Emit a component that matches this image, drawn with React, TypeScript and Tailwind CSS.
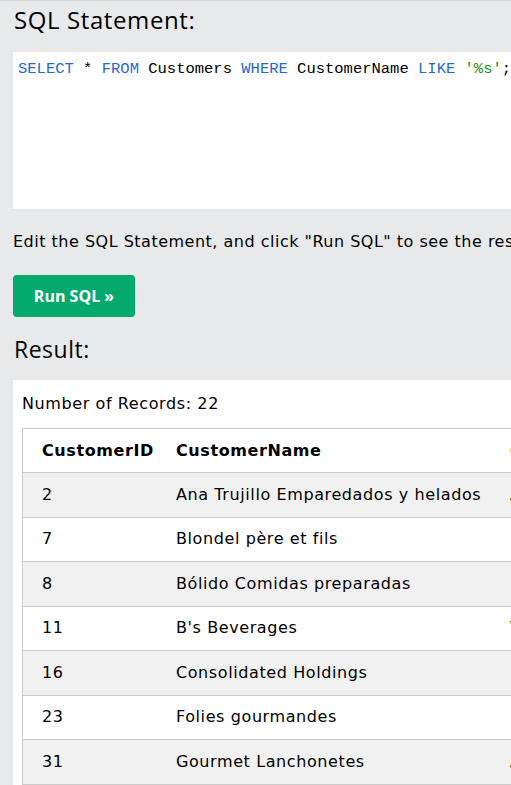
const rows = [
  ["2", "Ana Trujillo Emparedados y helados", "Ana Trujillo"],
  ["7", "Blondel père et fils", "Frédérique Citeaux"],
  ["8", "Bólido Comidas preparadas", "Martín Sommer"],
  ["11", "B's Beverages", "Victoria Ashworth"],
  ["16", "Consolidated Holdings", "Elizabeth Brown"],
  ["23", "Folies gourmandes", "Martine Rancé"],
  ["31", "Gourmet Lanchonetes", "André Fonseca"],
  ["34", "Hanari Carnes", "Mario Pontes"],
];

const heading = { fontFamily: '"Open Sans", "Noto Sans", sans-serif' };
const body = { fontFamily: '"DejaVu Sans", Verdana, sans-serif' };

const App = () => {
  return (
    <div className="w-[511px] h-[785px] overflow-hidden bg-[#e7e9eb] border-t border-[#d6d8da]">
      <div className="w-[900px] pl-[13px]">
        <h3 style={heading} className="text-[24px] tracking-[0.6px] leading-[32px] pt-[3px] pl-[1px] text-black">
          SQL Statement:
        </h3>

        <div className="mt-[16px] h-[157px] bg-white pt-[6px] pl-[5px]">
          <pre
            style={{ fontFamily: '"Liberation Mono", monospace' }}
            className="text-[15.5px] leading-[22px] text-black"
          >
            <span className="text-[#2568d4]">SELECT</span> *{" "}
            <span className="text-[#2568d4]">FROM</span> Customers{" "}
            <span className="text-[#2568d4]">WHERE</span> CustomerName{" "}
            <span className="text-[#2568d4]">LIKE</span>{" "}
            <span className="text-[#1a8f1a]">'%s'</span>;
          </pre>
        </div>

        <p style={body} className="mt-[22px] text-[16px] tracking-[0.5px] leading-[22px] text-black whitespace-nowrap">
          Edit the SQL Statement, and click "Run SQL" to see the result.
        </p>

        <button
          style={heading}
          className="mt-[22px] w-[122px] h-[42px] rounded-[4px] bg-[#04AA6D] text-white font-bold text-[16px]"
        >
          Run SQL »
        </button>

        <h3 style={heading} className="mt-[16px] text-[23px] tracking-[0.5px] leading-[32px] pl-[1px] text-black">
          Result:
        </h3>

        <div style={body} className="mt-[15px] bg-white pl-[9px] pt-[13px] pb-4 text-black text-[16px] tracking-[0.6px]">
          <p className="leading-[22px]">Number of Records: 22</p>
          <table className="mt-[13px] border border-[#cccccc] border-collapse text-left">
            <thead>
              <tr className="bg-white h-[44px]">
                <th className="pl-[19px] pr-[22px] font-bold">CustomerID</th>
                <th className="w-[334px] pr-0 font-bold">CustomerName</th>
                <th className="pl-0 pr-2 font-bold">ContactName</th>
              </tr>
            </thead>
            <tbody>
              {rows.map((r, i) => (
                <tr
                  key={r[0]}
                  className={`h-[44.5px] border-t border-[#cccccc] ${i % 2 === 0 ? "bg-[#f1f1f1]" : "bg-white"}`}
                >
                  <td className="pl-[19px]">{r[0]}</td>
                  <td>{r[1]}</td>
                  <td className="pl-0 pr-2">{r[2]}</td>
                </tr>
              ))}
            </tbody>
          </table>
        </div>
      </div>
    </div>
  );
};

export default App;
